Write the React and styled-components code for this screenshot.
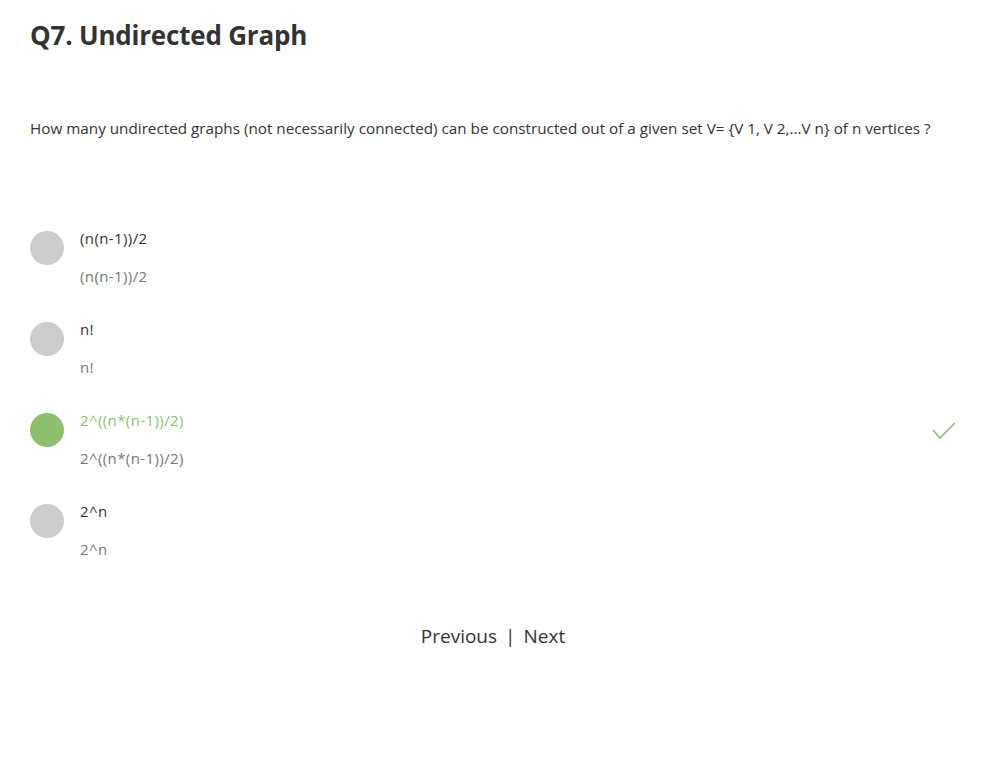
import React from 'react';
import styled, { createGlobalStyle } from 'styled-components';

const GlobalStyle = createGlobalStyle`
  body {
    margin: 0;
    background: #fff;
    font-family: "Open Sans", Lato, sans-serif;
    color: #333;
  }
`;

const Page = styled.main`
  padding: 16px 30px 0 30px;
  width: 990px;
  box-sizing: border-box;
`;

const Title = styled.h2`
  margin: 0;
  font-size: 26px;
  font-weight: 700;
  line-height: 38px;
  letter-spacing: -0.2px;
  color: #333;
`;

const Question = styled.p`
  margin: 64px 0 0 0;
  font-size: 15.25px;
  line-height: 21px;
  color: #333;
`;

const OptionList = styled.ul`
  list-style: none;
  margin: 89px 0 0 0;
  padding: 0;
  display: flex;
  flex-direction: column;
  gap: 33px;
`;

const OptionRow = styled.li`
  display: flex;
  align-items: flex-start;
  gap: 16px;
  padding-right: 3px;
`;

const Dot = styled.span`
  width: 34px;
  height: 34px;
  margin-top: 3px;
  border-radius: 50%;
  flex-shrink: 0;
  background: ${(p) => (p.$correct ? '#8dbf6d' : '#cccccc')};
`;

const OptionText = styled.div`
  flex: 1;
  display: flex;
  flex-direction: column;
  gap: 18px;
  font-size: 15px;
  letter-spacing: 0.4px;
  line-height: 20px;
`;

const Label = styled.span`
  color: ${(p) => (p.$correct ? '#8dbf6d' : '#333')};
`;

const Detail = styled.span`
  color: #777;
`;

const CheckWrap = styled.span`
  margin-top: 11px;
  display: flex;
`;

const Nav = styled.nav`
  margin-top: 64px;
  display: flex;
  justify-content: center;
  gap: 8px;
  font-size: 19px;
  line-height: 26px;
  color: #333;
  padding-right: 4px;
`;

const NavLink = styled.span`
  cursor: pointer;
`;

const options = [
  { label: '(n(n-1))/2' },
  { label: 'n!' },
  { label: '2^((n*(n-1))/2)', correct: true },
  { label: '2^n' },
];

const Check = () => (
  <svg width="26" height="20" viewBox="0 0 26 20" fill="none">
    <path d="M2 9 L9 17 L24 2" stroke="#8dbf6d" strokeWidth="1.6" />
  </svg>
);

const App = () => (
  <Page>
    <GlobalStyle />
    <Title>Q7. Undirected Graph</Title>
    <Question>
      How many undirected graphs (not necessarily connected) can be constructed out of a given set V= {'{'}V 1, V 2,...V n{'}'} of n vertices ?
    </Question>
    <OptionList>
      {options.map((o) => (
        <OptionRow key={o.label}>
          <Dot $correct={o.correct} />
          <OptionText>
            <Label $correct={o.correct}>{o.label}</Label>
            <Detail>{o.label}</Detail>
          </OptionText>
          {o.correct && (
            <CheckWrap>
              <Check />
            </CheckWrap>
          )}
        </OptionRow>
      ))}
    </OptionList>
    <Nav>
      <NavLink>Previous</NavLink>
      <span>|</span>
      <NavLink>Next</NavLink>
    </Nav>
  </Page>
);

export default App;
